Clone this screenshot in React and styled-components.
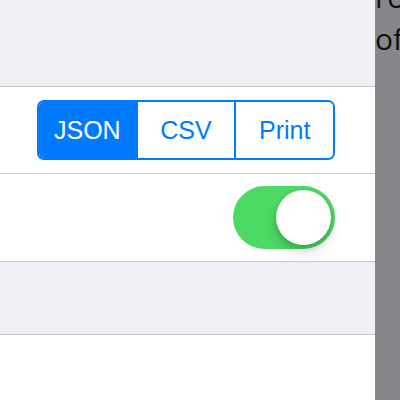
import React from 'react'
import styled, { createGlobalStyle } from 'styled-components'

const GlobalStyle = createGlobalStyle`
  html, body {
    margin: 0;
    padding: 0;
    background: #ffffff;
    font-family: "Liberation Sans", Arial, sans-serif;
  }
`

const Screen = styled.div`
  display: flex;
  width: 400px;
  height: 400px;
  overflow: hidden;
`

const Panel = styled.div`
  width: 375px;
  display: flex;
  flex-direction: column;
  background: #ffffff;
`

const GroupGap = styled.div`
  height: ${p => p.h}px;
  background: #efeff4;
  border-bottom: 1px solid #c8c7cc;
`

const Row = styled.div`
  height: ${p => p.h}px;
  display: flex;
  align-items: center;
  justify-content: flex-end;
  padding-right: 40px;
  border-bottom: 1px solid #c8c7cc;
`

const Segmented = styled.div`
  display: flex;
  width: 298px;
  height: 60px;
  box-sizing: border-box;
  border: 2px solid #007aff;
  border-radius: 7px;
  overflow: hidden;
`

const Segment = styled.div`
  flex: 1;
  display: flex;
  align-items: center;
  justify-content: center;
  font-size: 25px;
  color: ${p => (p.active ? '#ffffff' : '#007aff')};
  background: ${p => (p.active ? '#007aff' : '#ffffff')};
  & + & {
    border-left: 2px solid #007aff;
  }
`

const Switch = styled.div`
  width: 102px;
  height: 63px;
  border-radius: 32px;
  background: #4cd964;
  display: flex;
  align-items: center;
  justify-content: flex-end;
  padding-right: 4px;
  box-sizing: border-box;
`

const Knob = styled.div`
  width: 55px;
  height: 55px;
  border-radius: 50%;
  background: #ffffff;
  box-shadow: 0 3px 6px rgba(0, 0, 0, 0.15), 0 8px 14px rgba(0, 0, 0, 0.12),
    0 0 0 1px rgba(0, 0, 0, 0.03);
`

const Side = styled.div`
  width: 25px;
  background: #87878b;
  overflow: hidden;
`

const SideText = styled.p`
  margin: -24px 0 0 0;
  font-family: "Open Sans", "Liberation Sans", sans-serif;
  font-size: 30px;
  line-height: 42px;
  color: #111111;
  white-space: nowrap;
`

export default function App() {
  const [format, setFormat] = React.useState('JSON')

  return (
    <>
      <GlobalStyle />
      <Screen>
        <Panel>
          <GroupGap h={86} />
          <Row h={86}>
            <Segmented>
              {['JSON', 'CSV', 'Print'].map(f => (
                <Segment key={f} active={f === format} onClick={() => setFormat(f)}>
                  {f}
                </Segment>
              ))}
            </Segmented>
          </Row>
          <Row h={87}>
            <Switch>
              <Knob />
            </Switch>
          </Row>
          <GroupGap h={72} />
        </Panel>
        <Side>
          <SideText>
            ro
            <br />
            of
          </SideText>
        </Side>
      </Screen>
    </>
  )
}
